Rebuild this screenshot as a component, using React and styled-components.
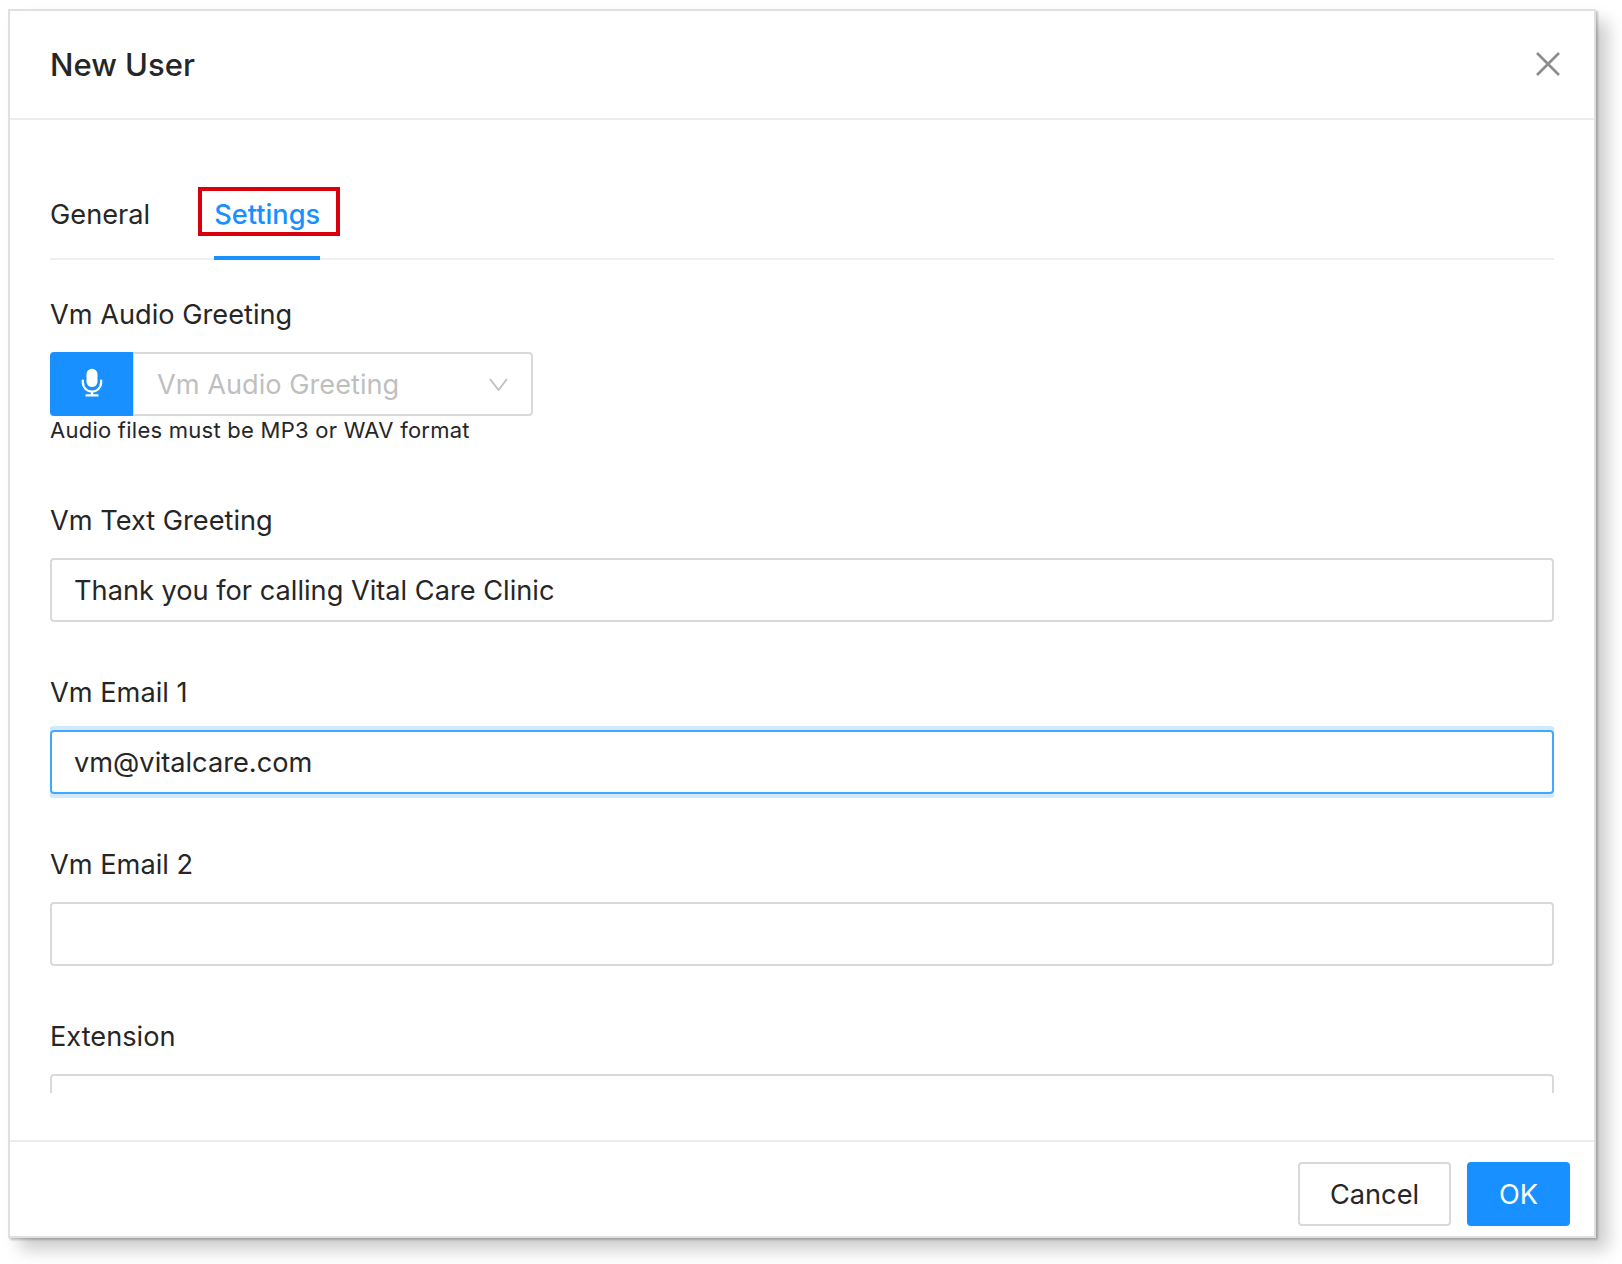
import styled, { createGlobalStyle } from 'styled-components'

const GlobalStyle = createGlobalStyle`
	html, body {
		margin: 0;
		background: #fff;
		font-family: Inter, 'Liberation Sans', sans-serif;
		color: #262626;
	}
`

const Page = styled.div`
	width: 1622px;
	height: 1264px;
	box-sizing: border-box;
	padding: 9px 0 0 8px;
	overflow: hidden;
`

const Modal = styled.div`
	width: 1588px;
	height: 1229px;
	box-sizing: border-box;
	display: flex;
	flex-direction: column;
	background: #fff;
	border: 2px solid #e0e0e0;
	box-shadow: 2px 2px 2px rgba(0, 0, 0, 0.22), 12px 12px 16px rgba(0, 0, 0, 0.2);
`

const Header = styled.header`
	height: 109px;
	flex: none;
	box-sizing: border-box;
	padding: 0 33px 0 40px;
	display: flex;
	align-items: center;
	justify-content: space-between;
	border-bottom: 2px solid #ececec;
`

const Title = styled.h1`
	margin: 0;
	font-size: 31px;
	font-weight: 500;
	color: #262626;
`

const CloseButton = styled.button`
	width: 26px;
	height: 26px;
	margin-top: -2px;
	padding: 0;
	border: 0;
	background: none;
	color: #8c8c8c;
	display: flex;
`

const Body = styled.div`
	flex: 1;
	min-height: 0;
	padding: 0 40px;
`

const Tabs = styled.div`
	margin-top: 68px;
	height: 72px;
	box-sizing: border-box;
	display: flex;
	gap: 64px;
	border-bottom: 2px solid #efefef;
`

const Tab = styled.div`
	position: relative;
	height: 72px;
	box-sizing: border-box;
	padding-top: 8px;
	font-size: 27.2px;
	line-height: 38px;
	font-weight: ${(props) => (props.$active ? 500 : 400)};
	color: ${(props) => (props.$active ? '#1890ff' : '#262626')};
	border-bottom: ${(props) => (props.$active ? '4px solid #1890ff' : '0')};
`

const Highlight = styled.span`
	position: absolute;
	left: -16px;
	right: -20px;
	top: -1px;
	height: 49px;
	box-sizing: border-box;
	border: 4px solid #d9000d;
`

const Scroll = styled.div`
	height: 833px;
	overflow: hidden;
`

const Field = styled.div`
	margin-bottom: 51px;
`

const FirstField = styled(Field)`
	padding-top: 35px;
	margin-bottom: 0;
`

const Label = styled.label`
	display: block;
	font-size: 27.2px;
	line-height: 40px;
	margin-bottom: 17px;
	color: #262626;
`

const AudioGroup = styled.div`
	display: flex;
	width: 483px;
	height: 64px;
`

const MicButton = styled.div`
	width: 83px;
	flex: none;
	padding-bottom: 3px;
	box-sizing: border-box;
	background: #1890ff;
	border-radius: 4px 0 0 4px;
	display: flex;
	align-items: center;
	justify-content: center;
`

const AudioSelect = styled.div`
	flex: 1;
	box-sizing: border-box;
	border: 2px solid #d9d9d9;
	border-left-width: 1px;
	border-radius: 0 4px 4px 0;
	padding: 0 23px;
	display: flex;
	align-items: center;
	justify-content: space-between;
	font-size: 27.2px;
	color: #bfbfbf;
`

const Help = styled.div`
	font-size: 22px;
	letter-spacing: 0.25px;
	line-height: 28px;
	color: #262626;
	margin-bottom: 57px;
`

const TextInput = styled.div`
	height: 64px;
	box-sizing: border-box;
	padding: 0 22px;
	display: flex;
	align-items: center;
	font-size: 27.2px;
	color: #262626;
	border: 2px solid ${(props) => (props.$focused ? '#40a9ff' : '#d9d9d9')};
	border-radius: 4px;
	box-shadow: ${(props) => (props.$focused ? '0 0 0 4px rgba(24, 144, 255, 0.2)' : 'none')};
`

const Footer = styled.footer`
	height: 96px;
	flex: none;
	box-sizing: border-box;
	padding: 20px 24px 0 0;
	display: flex;
	justify-content: flex-end;
	gap: 16px;
	border-top: 2px solid #ececec;
`

const Button = styled.button`
	height: 64px;
	width: ${(props) => (props.$primary ? '103px' : '153px')};
	box-sizing: border-box;
	font: inherit;
	font-size: 27.2px;
	border-radius: 4px;
	border: 2px solid ${(props) => (props.$primary ? '#1890ff' : '#d9d9d9')};
	background: ${(props) => (props.$primary ? '#1890ff' : '#fff')};
	color: ${(props) => (props.$primary ? '#fff' : '#262626')};
`

const App = () => {
	return (
		<Page>
			<GlobalStyle />
			<Modal>
				<Header>
					<Title>New User</Title>
					<CloseButton aria-label='Close'>
						<svg width='26' height='26' viewBox='0 0 26 26' fill='none' stroke='currentColor' strokeWidth='2.6'>
							<path d='M2 2 L24 24 M24 2 L2 24' />
						</svg>
					</CloseButton>
				</Header>
				<Body>
					<Tabs>
						<Tab>General</Tab>
						<Tab $active>
							<Highlight />
							Settings
						</Tab>
					</Tabs>
					<Scroll>
						<FirstField>
							<Label>Vm Audio Greeting</Label>
							<AudioGroup>
								<MicButton>
									<svg width='22' height='29' viewBox='0 0 24 30' fill='none'>
										<rect x='6' y='0' width='12' height='20' rx='6' fill='#fff' />
										<path d='M2 13 v2 a10 10 0 0 0 20 0 v-2' stroke='#fff' strokeWidth='2.6' strokeLinecap='round' />
										<path d='M12 25 v4 M5 29 h14' stroke='#fff' strokeWidth='2.6' />
									</svg>
								</MicButton>
								<AudioSelect>
									Vm Audio Greeting
									<svg width='19' height='13' viewBox='0 0 19 13' fill='none' stroke='#bfbfbf' strokeWidth='1.8'>
										<path d='M1 1 L9.5 12 L18 1' />
									</svg>
								</AudioSelect>
							</AudioGroup>
							<Help>Audio files must be MP3 or WAV format</Help>
						</FirstField>
						<Field>
							<Label>Vm Text Greeting</Label>
							<TextInput>Thank you for calling Vital Care Clinic</TextInput>
						</Field>
						<Field>
							<Label>Vm Email 1</Label>
							<TextInput $focused>vm@vitalcare.com</TextInput>
						</Field>
						<Field>
							<Label>Vm Email 2</Label>
							<TextInput />
						</Field>
						<Field>
							<Label>Extension</Label>
							<TextInput />
						</Field>
					</Scroll>
				</Body>
				<Footer>
					<Button>Cancel</Button>
					<Button $primary>OK</Button>
				</Footer>
			</Modal>
		</Page>
	)
}

export default App
